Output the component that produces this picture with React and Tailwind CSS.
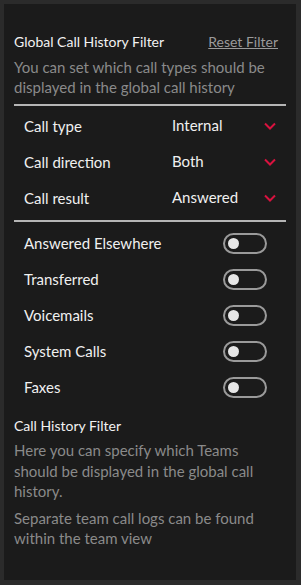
import React, { useState } from "react";

const selects = [
	{ label: "Call type", value: "Internal" },
	{ label: "Call direction", value: "Both" },
	{ label: "Call result", value: "Answered" },
];

const toggles = [
	"Answered Elsewhere",
	"Transferred",
	"Voicemails",
	"System Calls",
	"Faxes",
];

const Chevron = () => (
	<svg width="12" height="8" viewBox="0 0 12 8" fill="none">
		<path d="M1 1.5L6 6.5L11 1.5" stroke="#d9123f" strokeWidth="2" />
	</svg>
);

const Toggle = ({ on, onClick }) => (
	<button
		onClick={onClick}
		className="w-[44px] h-[21px] rounded-full border-2 border-[#9a9a9a] flex items-center px-[3px]"
	>
		<span
			className={
				on
					? "w-[11px] h-[11px] rounded-full bg-[#e6e6e6] ml-auto"
					: "w-[11px] h-[11px] rounded-full bg-[#e6e6e6]"
			}
		/>
	</button>
);

export default function App() {
	const [state, setState] = useState(toggles.map(() => false));

	const flip = (i) => {
		setState(state.map((v, j) => (j === i ? !v : v)));
	};

	return (
		<div
			className="w-[301px] h-[585px] bg-[#2b2b2b] pl-1 pt-1 pr-[5px] pb-[5px]"
			style={{ fontFamily: "Lato, 'Noto Sans', sans-serif" }}
		>
			<div className="h-full bg-[#1b1b1b] px-[10px] pt-[27px]">
				<div className="flex items-center justify-between pr-[8px]">
					<h2 className="text-[14px] text-[#f2f2f2]">
						Global Call History Filter
					</h2>
					<button className="text-[14px] text-[#9a9a9a] underline">
						Reset Filter
					</button>
				</div>

				<p className="text-[15px] leading-[20px] text-[#8a8a8a] mt-[5px]">
					You can set which call types should be displayed in the global
					call history
				</p>

				<div className="h-[2px] bg-[#b5b5b5] mt-[7px]" />

				<div className="flex flex-col pt-[2px] pb-[4px]">
					{selects.map((s) => (
						<div
							key={s.label}
							className="flex items-center h-[36px] pl-[10px] pr-[10px]"
						>
							<span className="text-[15px] text-[#f0f0f0] w-[148px]">
								{s.label}
							</span>
							<span className="text-[15px] text-[#f0f0f0] flex-1 -mt-[2px]">
								{s.value}
							</span>
							<Chevron />
						</div>
					))}
				</div>

				<div className="h-[2px] bg-[#b5b5b5]" />

				<div className="flex flex-col pt-[3px]">
					{toggles.map((t, i) => (
						<div
							key={t}
							className="flex items-center justify-between h-[36px] pl-[10px] pr-[19px]"
						>
							<span className="text-[15px] text-[#f0f0f0]">{t}</span>
							<Toggle on={state[i]} onClick={() => flip(i)} />
						</div>
					))}
				</div>

				<h3 className="text-[14px] text-[#f2f2f2] mt-[10px]">
					Call History Filter
				</h3>
				<p className="text-[15px] leading-[20.5px] text-[#8a8a8a] mt-[4px] pr-[30px]">
					Here you can specify which Teams should be displayed in the global
					call history.
				</p>
				<p className="text-[15px] leading-[20.5px] text-[#8a8a8a] mt-[6px] pr-[20px]">
					Separate team call logs can be found within the team view
				</p>
			</div>
		</div>
	);
}
